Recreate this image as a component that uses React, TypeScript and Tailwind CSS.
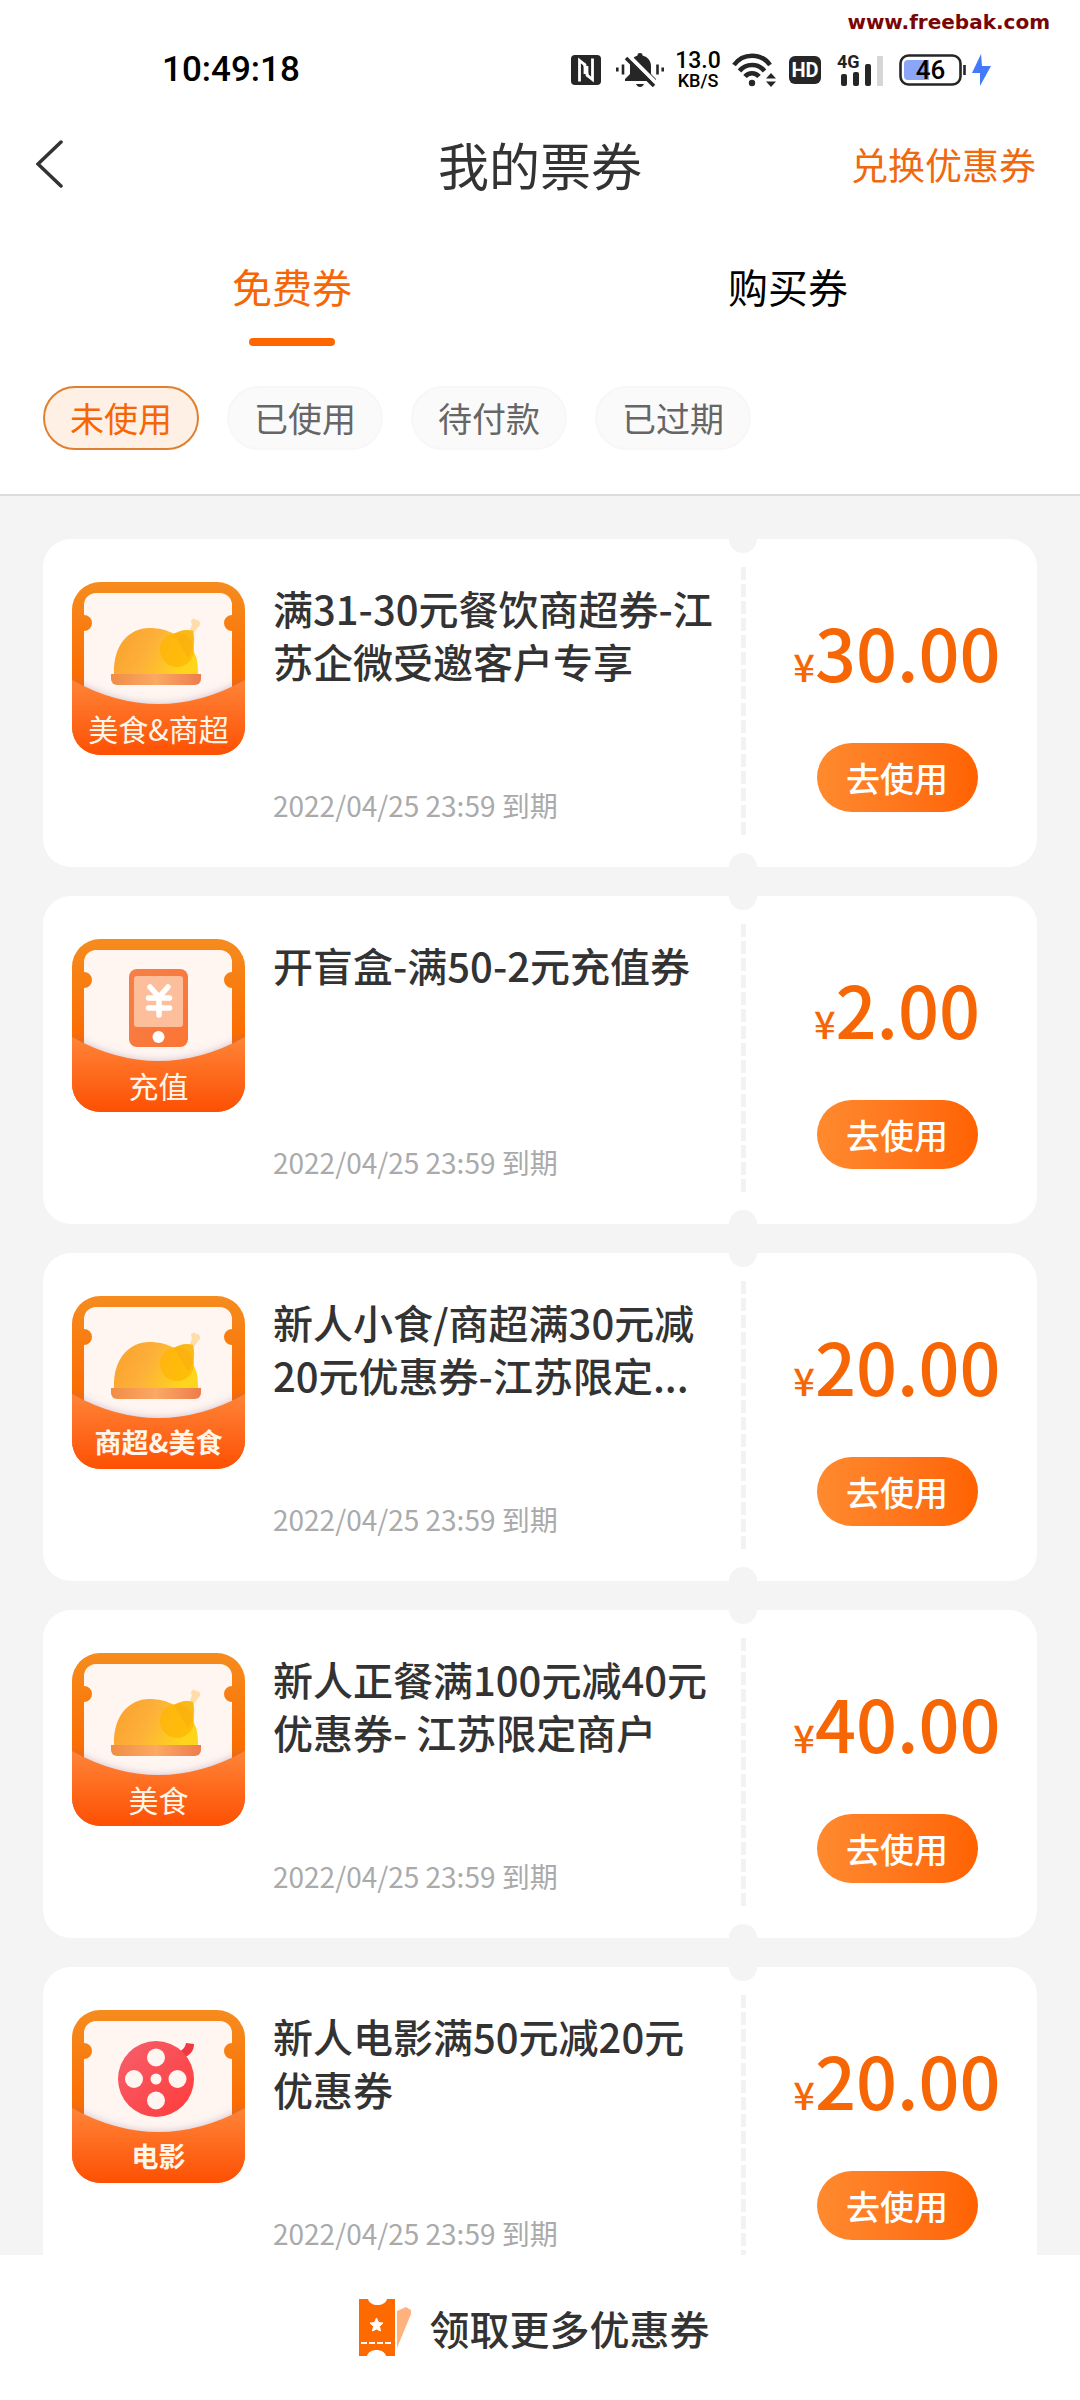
import { useState } from "react";

type CouponKind = "food" | "recharge" | "movie";

interface Coupon {
  id: number;
  kind: CouponKind;
  label: string;
  boldLabel?: boolean;
  title: string;
  amount: string;
  expires: string;
}

const coupons: Coupon[] = [
  { id: 1, kind: "food", label: "美食&商超", title: "满31-30元餐饮商超券-江苏企微受邀客户专享", amount: "30.00", expires: "2022/04/25 23:59" },
  { id: 2, kind: "recharge", label: "充值", title: "开盲盒-满50-2元充值券", amount: "2.00", expires: "2022/04/25 23:59" },
  { id: 3, kind: "food", label: "商超&美食", boldLabel: true, title: "新人小食/商超满30元减20元优惠券-江苏限定...", amount: "20.00", expires: "2022/04/25 23:59" },
  { id: 4, kind: "food", label: "美食", title: "新人正餐满100元减40元优惠券- 江苏限定商户", amount: "40.00", expires: "2022/04/25 23:59" },
  { id: 5, kind: "movie", label: "电影", boldLabel: true, title: "新人电影满50元减20元优惠券", amount: "20.00", expires: "2022/04/25 23:59" },
];

const tabs = ["免费券", "购买券"];
const filters = ["未使用", "已使用", "待付款", "已过期"];

function StatusBar() {
  return (
    <div className="relative flex h-[90px] items-end justify-between pl-[162px] pr-[88px] font-['Roboto',sans-serif] text-[#222]">
      <span className="absolute right-[30px] top-[10px] font-['DejaVu_Sans',sans-serif] text-[20px] font-bold leading-6 text-[#7a0505]">
        www.freebak.com
      </span>
      <span className="text-[35px] font-medium leading-10 text-black">10:49:18</span>
      <div className="flex h-10 items-center">
        <svg width="30" height="30" viewBox="0 0 30 30" aria-hidden="true">
          <rect width="30" height="30" rx="4" fill="#262626" />
          <path d="M8.500 26.500V5.500l5.500 4.500v9" fill="none" stroke="#fff" strokeWidth="2.800" />
          <path d="M21.500 3.500v21l-5.500-4.500v-9" fill="none" stroke="#fff" strokeWidth="2.800" />
          <path d="M13 8l4 14" fill="none" stroke="#fff" strokeWidth="2.500" />
        </svg>
        <svg className="ml-[15px]" width="48" height="34" viewBox="0 0 48 34" aria-hidden="true">
          <path d="M24 0c2 0 2.500 1 2.500 2.500C32 4 35 8 35 13v8l5 5v2H9v-2l5-5v-8c0-5 3-9 7.500-10.500C21.500 1 22 0 24 0z" fill="#262626" />
          <path d="M20 31h8c-1 2-2 3-4 3s-3-1-4-3z" fill="#262626" />
          <path d="M12 2l28 28" stroke="#fff" strokeWidth="4" />
          <path d="M10 5l28 28" stroke="#262626" strokeWidth="3.500" />
          <path d="M1.300 14.500v4M7 11.500v10M41.500 11.500v10M46.700 14.500v4" stroke="#262626" strokeWidth="2.600" />
        </svg>
        <div className="ml-3 flex w-11 flex-col items-center font-medium text-black">
          <span className="text-[23px] leading-[22px]">13.0</span>
          <span className="text-[18px] leading-[18px]">KB/S</span>
        </div>
        <svg className="ml-3" width="45" height="34" viewBox="0 0 45 34" aria-hidden="true">
          <g fill="none" stroke="#262626" strokeWidth="4.500">
            <path d="M2 12A22 22 0 0 1 38 12" />
            <path d="M7.500 18A16 16 0 0 1 32.500 18" />
            <path d="M13 23.500A9 9 0 0 1 27 23.500" />
          </g>
          <circle cx="20" cy="30" r="3.200" fill="#262626" />
          <path d="M39 20l5 5.500H34zM39 34l5-5.500H34z" fill="#262626" />
        </svg>
        <span className="ml-3 flex h-7 w-8 items-center justify-center rounded-md bg-[#262626] text-[20px] font-bold leading-7 text-white">
          HD
        </span>
        <div className="relative ml-4 h-8 w-[48px]">
          <span className="absolute left-0 top-0 text-[18px] font-bold leading-4">4G</span>
          <svg width="48" height="32" viewBox="0 0 48 32" aria-hidden="true">
            <rect x="4" y="20" width="6" height="12" rx="2" fill="#262626" />
            <rect x="16" y="18" width="6" height="14" rx="2" fill="#262626" />
            <rect x="28" y="10" width="6" height="22" rx="2" fill="#262626" />
            <rect x="40" y="2" width="6" height="30" rx="1" fill="#d6d6d6" />
          </svg>
        </div>
        <div className="relative ml-[14px] h-8 w-[67px]">
          <svg width="67" height="32" viewBox="0 0 67 32" aria-hidden="true">
            <rect x="1.500" y="1.500" width="60" height="29" rx="8" fill="#fff" stroke="#262626" strokeWidth="2.600" />
            <path d="M9 6h21v20H9a4 4 0 0 1-4-4V10a4 4 0 0 1 4-4z" fill="#8ba5f7" />
            <path d="M65.500 11v10" stroke="#262626" strokeWidth="2.600" />
          </svg>
          <span className="absolute inset-0 pr-1 text-center text-[26px] font-medium leading-8 text-black">46</span>
        </div>
        <svg className="ml-[6px]" width="20" height="32" viewBox="0 0 20 32" aria-hidden="true">
          <path d="M9 0L0 19h8v13l11-20h-9z" fill="#4479fb" />
        </svg>
      </div>
    </div>
  );
}

function FoodArt() {
  return (
    <g>
      <path d="M118 48l2-6c-3-4 2-7 4-4 4-1 6 5 2 7l-4 6z" fill="#ffdcaa" />
      <path d="M42 92C41 62 58 46 77 46c10 0 18 2 25 6 7-4 13-5 19-3 2 8 1 16 0 20 4 5 5 12 5 23z" fill="url(#chicken)" />
      <circle cx="105" cy="68" r="17" fill="#ffb300" fillOpacity=".7" />
      <path d="M102 52c7-4 13-5 19-3 2 9 0 20-5 27z" fill="#f9ad10" fillOpacity=".6" />
      <path d="M39 92h90v5a6 6 0 0 1-6 6H45a6 6 0 0 1-6-6z" fill="url(#plate)" />
    </g>
  );
}

function RechargeArt() {
  return (
    <g>
      <rect x="57" y="30" width="59" height="78" rx="8" fill="url(#phone)" />
      <rect x="62" y="37" width="49" height="51" rx="3" fill="#fdbf9b" />
      <path d="M78 48l9 10 9-10M87 58v18M76.500 59h21M76.500 69h21" fill="none" stroke="#fff" strokeWidth="5.500" strokeLinecap="round" strokeLinejoin="round" />
      <circle cx="86.500" cy="98" r="6" fill="#fff" />
    </g>
  );
}

function MovieArt() {
  return (
    <g>
      <path d="M105 42c5-1 8-4 9-9l8 1c0 7-4 11-10 14z" fill="#ef3a42" />
      <circle cx="84" cy="69" r="38" fill="url(#reel)" />
      <g fill="#fff6f1">
        <circle cx="84" cy="47.500" r="9" />
        <circle cx="62" cy="69" r="9" />
        <circle cx="105.500" cy="69" r="9" />
        <circle cx="84" cy="90.500" r="9" />
        <circle cx="84" cy="69" r="5.500" />
      </g>
    </g>
  );
}

// shared gradients, referenced by every coupon badge
function BadgeDefs() {
  return (
    <svg className="absolute" width="0" height="0" aria-hidden="true">
      <defs>
        <linearGradient id="frame" x1="0" y1="0" x2="0" y2="1">
          <stop offset="0" stopColor="#f68c1e" />
          <stop offset=".6" stopColor="#fb6a00" />
        </linearGradient>
        <linearGradient id="pocket" x1="0" y1="0" x2="0" y2="1">
          <stop offset="0" stopColor="#ff8438" />
          <stop offset="1" stopColor="#fd5003" />
        </linearGradient>
        <linearGradient id="chicken" x1="0" y1="0" x2="1" y2=".3">
          <stop offset="0" stopColor="#f9a02c" />
          <stop offset=".5" stopColor="#fdb03a" />
          <stop offset="1" stopColor="#fdd51c" />
        </linearGradient>
        <linearGradient id="plate" x1="0" y1="0" x2="1" y2="0">
          <stop offset="0" stopColor="#f08d45" />
          <stop offset=".5" stopColor="#fba963" />
          <stop offset="1" stopColor="#ee7c4d" />
        </linearGradient>
        <linearGradient id="phone" x1="0" y1="0" x2="1" y2="1">
          <stop offset="0" stopColor="#f58048" />
          <stop offset="1" stopColor="#fc7434" />
        </linearGradient>
        <linearGradient id="reel" x1="0" y1="0" x2="1" y2="1">
          <stop offset="0" stopColor="#f5606c" />
          <stop offset="1" stopColor="#ff3b3b" />
        </linearGradient>
        <clipPath id="badge">
          <rect width="173" height="173" rx="28" />
        </clipPath>
        <filter id="soft" x="-20%" y="-20%" width="140%" height="140%">
          <feGaussianBlur stdDeviation="4" />
        </filter>
      </defs>
    </svg>
  );
}

function CouponBadge({ kind, label, bold }: { kind: CouponKind; label: string; bold?: boolean }) {
  return (
    <div className="relative h-[173px] w-[173px] shrink-0">
      <svg width="173" height="173" viewBox="0 0 173 173" aria-hidden="true">
        <g clipPath="url(#badge)">
          <rect width="173" height="173" fill="url(#frame)" />
          <path d="M24 11h124a12 12 0 0 1 12 12v10a8 8 0 0 0 0 16v90H12V49a8 8 0 0 0 0-16V23a12 12 0 0 1 12-12z" fill="#fff6f1" />
          {kind === "food" && <FoodArt />}
          {kind === "recharge" && <RechargeArt />}
          {kind === "movie" && <MovieArt />}
          <path d="M0 98Q86.500 146 173 98V173H0z" fill="#8b6a9c" fillOpacity=".4" filter="url(#soft)" />
          <path d="M0 98Q86.500 146 173 98V173H0z" fill="url(#pocket)" />
        </g>
      </svg>
      <span
        className={`absolute inset-x-0 bottom-[7px] whitespace-nowrap text-center leading-10 text-[#fff6ea] ${
          bold ? "text-[27px] font-bold" : "text-[30px]"
        }`}
      >
        {label}
      </span>
    </div>
  );
}

function CouponCard({ coupon }: { coupon: Coupon }) {
  return (
    <li className="flex shrink-0 overflow-hidden rounded-[28px] bg-white">
      <div className="flex flex-1 gap-7 pb-11 pl-[29px] pr-2 pt-[43px]">
        <CouponBadge kind={coupon.kind} label={coupon.label} bold={coupon.boldLabel} />
        <div className="flex h-[241px] flex-1 flex-col justify-between">
          <h2 className="text-[40px] font-medium leading-[53px] text-[#333]">{coupon.title}</h2>
          <p className="text-[28px] leading-9 text-[#aaa]">{coupon.expires} 到期</p>
        </div>
      </div>
      <div className="flex w-7 flex-col items-center justify-between">
        <span className="h-[14px] w-7 rounded-b-full bg-[#f4f4f4]" />
        <span className="my-[14px] w-[5px] flex-1 bg-[repeating-linear-gradient(to_bottom,#f2f2f2_0_13px,transparent_13px_17px)]" />
        <span className="h-[14px] w-7 rounded-t-full bg-[#f4f4f4]" />
      </div>
      <div className="flex w-[280px] flex-col items-center pt-[76px]">
        <p className="flex items-baseline font-medium leading-[72px] text-[#f76605]">
          <span className="text-[38px]">¥</span>
          <span className="text-[72px]">{coupon.amount}</span>
        </p>
        <button
          type="button"
          className="mt-[41px] h-[69px] w-[161px] rounded-full bg-linear-to-r from-[#ff8a2e] to-[#ff6200] text-[34px] font-medium leading-[69px] text-white"
        >
          去使用
        </button>
      </div>
    </li>
  );
}

export default function App() {
  const [activeTab, setActiveTab] = useState(0);
  const [activeFilter, setActiveFilter] = useState(0);

  return (
    <div className="flex h-screen flex-col bg-[#f4f4f4] font-['Noto_Sans_CJK_SC',sans-serif]" lang="zh-CN">
      <BadgeDefs />
      <header className="shrink-0 border-b-2 border-[#dcdcdc] bg-white">
        <StatusBar />
        <div className="mt-[38px] grid h-[72px] grid-cols-[1fr_auto_1fr] items-center px-[36px]">
          <button type="button" aria-label="返回" className="justify-self-start">
            <svg width="28" height="50" viewBox="0 0 28 50" fill="none" stroke="#333" strokeWidth="3.500" strokeLinecap="round" aria-hidden="true">
              <path d="M25 3L2 25l23 22" />
            </svg>
          </button>
          <h1 className="text-[51px] leading-[72px] text-[#333]">我的票券</h1>
          <a href="#redeem" className="justify-self-end pr-2 text-[37px] leading-[72px] text-[#f0690f]">
            兑换优惠券
          </a>
        </div>

        <nav className="mt-[60px] grid grid-cols-2 px-11">
          {tabs.map((tab, i) => (
            <button key={tab} type="button" onClick={() => setActiveTab(i)} className="flex flex-col items-center">
              <span className={`text-[40px] leading-[52px] ${activeTab === i ? "text-[#f76605]" : "text-black"}`}>{tab}</span>
              <span className={`mt-[26px] h-2 w-[86px] rounded-full ${activeTab === i ? "bg-[#ff6600]" : "bg-transparent"}`} />
            </button>
          ))}
        </nav>

        <div className="mb-11 mt-10 flex gap-7 px-[43px]">
          {filters.map((filter, i) => (
            <button
              key={filter}
              type="button"
              onClick={() => setActiveFilter(i)}
              className={`h-16 w-[156px] rounded-full border-2 text-[34px] leading-[58px] ${
                activeFilter === i ? "border-[#e0802f] bg-[#fff0e5] text-[#f76605]" : "border-[#f7f7f7] bg-[#fafafa] text-[#666]"
              }`}
            >
              {filter}
            </button>
          ))}
        </div>
      </header>

      <ul className="flex min-h-0 flex-1 flex-col gap-[29px] overflow-y-auto px-[43px] pt-[43px] [scrollbar-width:none]">
        {coupons.map((coupon) => (
          <CouponCard key={coupon.id} coupon={coupon} />
        ))}
      </ul>

      <a href="#more" className="flex h-[145px] shrink-0 items-center justify-center gap-[18px] bg-white pr-3 text-[40px] font-medium text-[#333]">
        <svg width="53" height="57" viewBox="0 0 53 57" aria-hidden="true">
          <path d="M38 12l9-4 5 3v4L38 49z" fill="#ffb27e" />
          <path d="M0 0h9c2 8 17 8 19 0h8v57h-9c-2-8-17-8-19 0H0z" fill="#ff6a00" />
          <path d="M17.500 19l2 4.500 4.500 .5-3.500 3.500 1 4.500-4-2-4 2 1-4.500-3.500-3.500 4.500-.5z" fill="#fff" stroke="#fff" strokeLinejoin="round" />
          <path d="M2 44h30" stroke="#fff" strokeWidth="2" strokeDasharray="6 2" />
        </svg>
        领取更多优惠券
      </a>
    </div>
  );
}
